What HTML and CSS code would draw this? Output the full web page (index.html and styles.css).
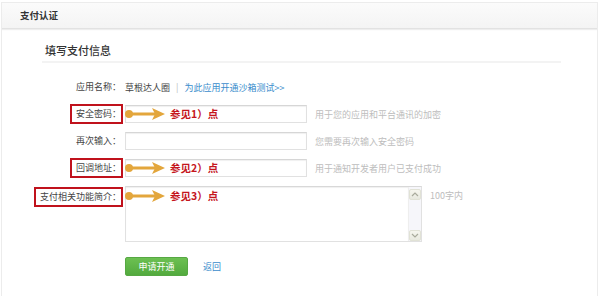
FILE: index.html
```html
<!DOCTYPE html>
<html lang="zh-CN">
<head>
<meta charset="utf-8">
<title>支付认证</title>
<link rel="stylesheet" href="styles.css">
</head>
<body>
<div class="panel">
  <div class="panel-head">支付认证</div>
  <div class="panel-body">
    <div class="section-title">填写支付信息</div>
    <div class="form">
      <div class="row">
        <div class="label"><span class="txt">应用名称：</span></div>
        <div class="field">
          <span class="app-name">草根达人圈</span>
          <span class="sep">|</span>
          <a class="link">为此应用开通沙箱测试&gt;&gt;</a>
        </div>
      </div>
      <div class="row">
        <div class="label"><span class="txt mark">安全密码：</span></div>
        <div class="field">
          <div class="input">
            <span class="note">
              <svg class="arrow" width="42" height="14" viewBox="0 0 42 14"><circle cx="4" cy="7" r="4" fill="#e3a63c"/><rect x="4" y="5.5" width="28" height="3" fill="#e3a63c"/><path d="M27 1 L40 7 L27 13 L30 7 Z" fill="#e3a63c"/></svg>
              <span class="note-text">参见1）点</span>
            </span>
          </div>
          <span class="hint">用于您的应用和平台通讯的加密</span>
        </div>
      </div>
      <div class="row">
        <div class="label"><span class="txt">再次输入：</span></div>
        <div class="field">
          <div class="input"></div>
          <span class="hint">您需要再次输入安全密码</span>
        </div>
      </div>
      <div class="row">
        <div class="label"><span class="txt mark">回调地址：</span></div>
        <div class="field">
          <div class="input">
            <span class="note">
              <svg class="arrow" width="42" height="14" viewBox="0 0 42 14"><circle cx="4" cy="7" r="4" fill="#e3a63c"/><rect x="4" y="5.5" width="28" height="3" fill="#e3a63c"/><path d="M27 1 L40 7 L27 13 L30 7 Z" fill="#e3a63c"/></svg>
              <span class="note-text">参见2）点</span>
            </span>
          </div>
          <span class="hint">用于通知开发者用户已支付成功</span>
        </div>
      </div>
      <div class="row row-tall">
        <div class="label"><span class="txt mark">支付相关功能简介：</span></div>
        <div class="field field-top">
          <div class="textarea">
            <div class="ta-body">
              <span class="note">
                <svg class="arrow" width="42" height="14" viewBox="0 0 42 14"><circle cx="4" cy="7" r="4" fill="#e3a63c"/><rect x="4" y="5.5" width="28" height="3" fill="#e3a63c"/><path d="M27 1 L40 7 L27 13 L30 7 Z" fill="#e3a63c"/></svg>
                <span class="note-text">参见3）点</span>
              </span>
            </div>
            <div class="scrollbar">
              <div class="sb-btn"><svg width="8" height="5" viewBox="0 0 8 5"><path d="M1 4 L4 1 L7 4" fill="none" stroke="#a9ab9c" stroke-width="1.2"/></svg></div>
              <div class="sb-track"></div>
              <div class="sb-btn"><svg width="8" height="5" viewBox="0 0 8 5"><path d="M1 1 L4 4 L7 1" fill="none" stroke="#a9ab9c" stroke-width="1.2"/></svg></div>
            </div>
          </div>
          <span class="hint hint-top">100字内</span>
        </div>
      </div>
      <div class="actions">
        <button class="btn">申请开通</button>
        <a class="link back">返回</a>
      </div>
    </div>
  </div>
</div>
</body>
</html>
```

FILE: styles.css
```css
* { box-sizing: border-box; }
html, body { margin: 0; padding: 0; background: #fff; }
body {
  font-family: "Noto Sans CJK SC", "Liberation Sans", sans-serif;
  font-size: 9px;
  color: #444;
  padding: 2px 2px 0 1px;
  height: 296px;
  overflow: hidden;
}
.panel {
  border: 1px solid #ececec;
  border-bottom: none;
  height: 300px;
}
.panel-head {
  height: 26px;
  background: linear-gradient(#fbfbfb, #f4f4f4);
  border-bottom: 1px solid #e2e2e2;
  box-shadow: 0 1px 1px #eeeeee;
  padding-left: 18px;
  line-height: 25px;
  font-size: 9.5px;
  font-weight: bold;
  color: #333;
}
.panel-body { padding: 13px 36px 0 40px; }
.section-title {
  font-size: 11px;
  font-weight: 500;
  color: #333;
  padding-left: 3px;
  height: 21px;
  line-height: 16px;
  border-bottom: 2px solid #f3f3f3;
}
.form {
  padding-top: 15px;
  display: flex;
  flex-direction: column;
  gap: 9px;
}
.row {
  display: flex;
  align-items: center;
  height: 18px;
}
.row-tall { height: 56px; align-items: flex-start; }
.label {
  width: 81px;
  display: flex;
  justify-content: flex-end;
  flex: none;
}
.row-tall .label { padding-top: 1px; }
.txt { color: #444; line-height: 12px; white-space: nowrap; margin-right: 2px; }
.mark {
  border: 2px solid #c0121c;
  padding: 2px 0 2px 4px;
  margin-right: 0;
}
.field {
  display: flex;
  align-items: center;
  gap: 8px;
  margin-left: 2px;
}
.field-top { align-items: flex-start; }
.app-name { color: #444; }
.sep { color: #bbb; margin: 0 -2px; }
.link { color: #3b8dcc; cursor: pointer; text-decoration: none; }
.input {
  width: 182px;
  height: 18px;
  border: 1px solid #e1e1e1;
  border-top-color: #d6d6d6;
  box-shadow: inset 0 1px 1px #f0f0f0;
  background: #fff;
  display: flex;
  align-items: center;
}
.note {
  display: flex;
  align-items: center;
  gap: 3px;
  margin-left: -1px;
}
.arrow { display: block; flex: none; }
.note-text {
  color: #c5161d;
  font-weight: bold;
  font-size: 10.5px;
  line-height: 12px;
  white-space: nowrap;
}
.hint { color: #bdbdbd; white-space: nowrap; }
.hint-top { margin-top: 3px; }
.textarea {
  width: 297px;
  height: 56px;
  border: 1px solid #e1e1e1;
  border-top-color: #d8d8d8;
  display: flex;
  background: #fff;
}
.ta-body {
  flex: 1;
  padding-top: 2px;
  box-shadow: inset 0 1px 1px #f0f0f0;
}
.scrollbar {
  width: 13px;
  display: flex;
  flex-direction: column;
  background: #f6f6fa;
  border-left: 1px solid #eeeeee;
}
.sb-btn {
  height: 11px;
  background: linear-gradient(#f6f6ee, #e8e9df);
  border: 1px solid #e1e2d6;
  border-radius: 2px;
  display: flex;
  align-items: center;
  justify-content: center;
  margin: 2px 0 0 0;
}
.sb-btn:last-child { margin: 0; }
.sb-track { flex: 1; }
.actions {
  display: flex;
  align-items: center;
  gap: 15px;
  margin: 6px 0 0 83px;
}
.btn {
  width: 63px;
  height: 19px;
  border: 1px solid #56a843;
  border-radius: 2px;
  background: linear-gradient(#6cc052, #53aa3e);
  color: #fff;
  font-family: "Noto Sans CJK SC", "Liberation Sans", sans-serif;
  font-size: 9px;
  padding: 0;
  line-height: 17px;
}
.back { font-size: 9px; }
```
